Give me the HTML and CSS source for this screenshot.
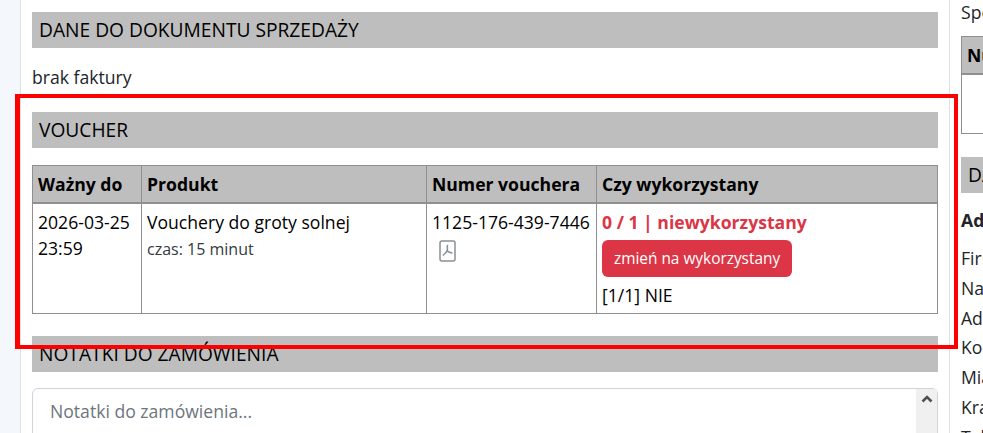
FILE: index.html
```html
<!DOCTYPE html>
<html lang="pl">
<head>
    <meta charset="UTF-8">
    <title>Zamówienie</title>
    <link rel="stylesheet" href="styles.css">
</head>
<body>
    <div class="page">
        <div class="main">
            <h2 class="bar">DANE DO DOKUMENTU SPRZEDAŻY</h2>
            <p class="invoice">brak faktury</p>

            <h2 class="bar">VOUCHER</h2>
            <table class="grid voucher">
                <thead>
                    <tr>
                        <th class="col-date">Ważny do</th>
                        <th class="col-product">Produkt</th>
                        <th class="col-number">Numer vouchera</th>
                        <th>Czy wykorzystany</th>
                    </tr>
                </thead>
                <tbody>
                    <tr>
                        <td>2026-03-25 23:59</td>
                        <td>Vouchery do groty solnej<small class="duration">czas: 15 minut</small></td>
                        <td>
                            1125-176-439-7446
                            <a class="pdf" href="#" aria-label="PDF">
                                <svg width="17" height="22" viewBox="0 0 17 22" fill="none">
                                    <rect x="1" y="1" width="15" height="20" rx="2" stroke="#8a9097" stroke-width="1.5"/>
                                    <path d="M8.4 5.5c-.5 1.500.5 3.500-.3 5.300-.7 1.600-2.200 3-3.700 4.200M8 10.800c1.500 1.300 3 1.700 4.800 2.200" stroke="#8a9097" stroke-width="1.600" stroke-linecap="round"/>
                                </svg>
                            </a>
                        </td>
                        <td>
                            <strong class="unused">0 / 1 | niewykorzystany</strong>
                            <button class="btn-red">zmień na wykorzystany</button>
                            <div>[1/1] NIE</div>
                        </td>
                    </tr>
                </tbody>
            </table>

            <h2 class="bar">NOTATKI DO ZAMÓWIENIA</h2>
            <div class="notes">
                <textarea class="notes-input" placeholder="Notatki do zamówienia..."></textarea>
                <div class="scroll-track">
                    <svg width="12" height="8" viewBox="0 0 12 8" fill="none"><path d="M1.500 6.500L6 2l4.500 4.500" stroke="#505050" stroke-width="2.600"/></svg>
                </div>
            </div>
        </div>

        <div class="side">
            <div class="side-top">Specjalne uwagi</div>
            <table class="grid side-table">
                <thead><tr><th>Numer</th></tr></thead>
                <tbody><tr><td></td></tr></tbody>
            </table>
            <h2 class="bar">DANE KLIENTA</h2>
            <p class="side-title">Adres</p>
            <ul class="side-list">
                <li>Firma</li>
                <li>Nazwa</li>
                <li>Adres</li>
                <li>Kod</li>
                <li>Miasto</li>
                <li>Kraj</li>
                <li>Telefon</li>
            </ul>
        </div>
    </div>

    <div class="highlight"></div>
</body>
</html>
```

FILE: styles.css
```css
* {
    box-sizing: border-box;
}

html, body {
    height: 100%;
    margin: 0;
    overflow: hidden;
}

body {
    background-color: #f4f7fb;
    color: #212529;
    font-family: "Open Sans", sans-serif;
    font-size: 17.6px;
    line-height: 26.4px;
}

.page {
    display: flex;
    height: 433px;
    margin-left: 20px;
    background-color: #fff;
    border-left: 1px solid #dee2e6;
    overflow: hidden;
}

.main {
    flex: none;
    width: 929px;
    padding: 12px 11px 0 11px;
    border-right: 1px solid #dee2e6;
}

.side {
    flex: 1;
    min-width: 0;
    padding-left: 11px;
    overflow: hidden;
    white-space: nowrap;
}

.bar {
    margin: 0;
    height: 36px;
    padding: 0 7px;
    background-color: #bebebe;
    color: #000;
    font-size: 19.2px;
    font-weight: 400;
    line-height: 36px;
    white-space: nowrap;
}

.invoice {
    margin: 0;
    padding: 16px 0 22px;
    line-height: 26px;
}

.grid {
    border-collapse: collapse;
    width: 100%;
    color: #000;
}

.grid th,
.grid td {
    border: 1px solid #8f8f8f;
    padding: 5px 5px;
    text-align: left;
    vertical-align: top;
}

.grid th {
    background-color: #bebebe;
    border-bottom-width: 2px;
    font-weight: 700;
}

.voucher {
    margin: 17px 0 22px;
    table-layout: fixed;
}

.col-date {
    width: 109px;
}

.col-product {
    width: 285px;
}

.col-number {
    width: 170px;
}

.voucher td {
    line-height: 26px;
}

.duration {
    display: block;
    margin-top: 2px;
    color: #343a40;
    font-size: 16px;
    line-height: 24px;
}

.pdf {
    display: block;
    width: 17px;
    margin: 5px 0 0 7px;
    line-height: 0;
}

.unused {
    display: block;
    color: #dc3545;
}

.btn-red {
    display: block;
    height: 37px;
    margin: 5px 0 5px;
    padding: 0 12px;
    background-color: #dc3545;
    border: 0;
    border-radius: 6px;
    color: #fff;
    font-family: inherit;
    font-size: 15.4px;
}

.notes {
    position: relative;
    margin-top: 16px;
}

.notes-input {
    display: block;
    width: 100%;
    height: 120px;
    padding: 9px 17px;
    border: 1px solid #ced4da;
    border-radius: 6px;
    font-family: inherit;
    font-size: 17.6px;
    line-height: 26.4px;
    resize: none;
}

.notes-input::placeholder {
    color: #6c757d;
}

.scroll-track {
    position: absolute;
    top: 1px;
    right: 1px;
    bottom: 1px;
    width: 21px;
    padding-top: 6px;
    background-color: #f0f0f0;
    line-height: 0;
    text-align: center;
}

.side-top {
    line-height: 24px;
}

.side-table {
    width: 200px;
    margin-top: 12px;
}

.side-table td {
    height: 59px;
}

.side .bar {
    margin-top: 23px;
}

.side-title {
    margin: 14px 0 0;
    font-weight: 700;
}

.side-list {
    margin: 11px 0 0;
    padding: 0;
    list-style: none;
    line-height: 29.7px;
}

/* red frame drawn over the screenshot */
.highlight {
    position: absolute;
    top: 94px;
    left: 15px;
    width: 943px;
    height: 255px;
    border: 4px solid #f00;
    border-left-width: 5px;
    pointer-events: none;
}
```
